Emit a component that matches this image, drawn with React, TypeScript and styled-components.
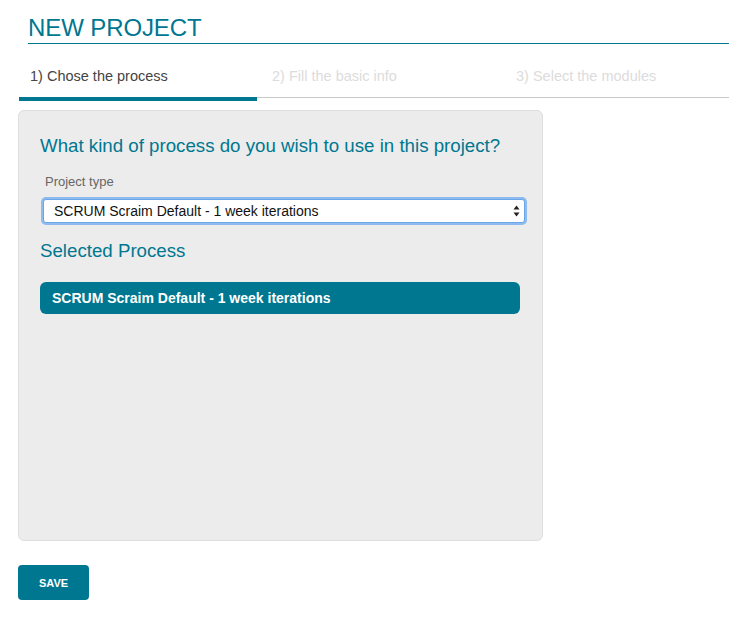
import React from "react";
import styled, { createGlobalStyle } from "styled-components";

const TEAL = "#007790";

const Global = createGlobalStyle`
  html, body { margin: 0; padding: 0; background: #fff; }
  body { font-family: "Liberation Sans", Arial, sans-serif; }
  * { box-sizing: border-box; }
`;

const Page = styled.div`
  display: flex;
  flex-direction: column;
  width: 729px;
`;

const Title = styled.h1`
  margin: 0 0 0 28px;
  padding-top: 13px;
  font-size: 24px;
  line-height: 30px;
  font-weight: 400;
  color: ${TEAL};
  border-bottom: 1px solid ${TEAL};
  letter-spacing: -0.1px;
`;

const TabBar = styled.div`
  display: grid;
  grid-template-columns: 238px 244px 1fr;
  margin-left: 19px;
`;

const Tab = styled.div<{ $active?: boolean }>`
  display: flex;
  flex-direction: column;
  padding-top: 23px;
  font-size: 14.5px;
  line-height: 18px;
  color: ${(p) => (p.$active ? "#444" : "#dcdcdc")};
`;

const TabLabel = styled.span<{ $inset: number }>`
  padding-left: ${(p) => p.$inset}px;
  padding-bottom: 12px;
`;

const TabLine = styled.div<{ $active?: boolean }>`
  height: 4px;
  background: ${(p) =>
    p.$active ? TEAL : "linear-gradient(#c8c8c8 0 1px, transparent 1px)"};
`;

const Panel = styled.section`
  margin: 9px 0 0 18px;
  width: 525px;
  height: 431px;
  background: #ececec;
  border: 1px solid #dedede;
  border-radius: 6px;
  padding: 24px 21px;
  display: flex;
  flex-direction: column;
`;

const Heading = styled.h2<{ $gap: number }>`
  margin: ${(p) => p.$gap}px 0 0 0;
  font-size: 18.7px;
  line-height: 22px;
  font-weight: 400;
  color: ${TEAL};
`;

const Label = styled.label`
  margin: 17px 0 0 5px;
  font-size: 13px;
  line-height: 16px;
  color: #666;
`;

const SelectWrap = styled.div`
  position: relative;
  margin: 9px 0 0 3px;
  width: 482px;
  height: 24px;
`;

const Select = styled.select`
  appearance: none;
  -webkit-appearance: none;
  width: 100%;
  height: 100%;
  margin: 0;
  padding: 0 24px 0 10px;
  font-family: "Liberation Sans", Arial, sans-serif;
  font-size: 14px;
  color: #111;
  background: #fff;
  border: 1px solid #6aa6e8;
  border-radius: 3px;
  box-shadow: 0 0 0 2px rgba(110, 170, 240, 0.75);
  outline: none;
`;

const Arrows = styled.svg`
  position: absolute;
  right: 5px;
  top: 6px;
  pointer-events: none;
`;

const SelectedBar = styled.div`
  margin-top: 20px;
  height: 32px;
  width: 480px;
  border-radius: 6px;
  background: ${TEAL};
  color: #fff;
  font-size: 14px;
  font-weight: 700;
  display: flex;
  align-items: center;
  padding-left: 12px;
`;

const SaveButton = styled.button`
  margin: 24px 0 0 18px;
  width: 71px;
  height: 35px;
  border: none;
  border-radius: 4px;
  background: ${TEAL};
  color: #fff;
  font-family: "Liberation Sans", Arial, sans-serif;
  font-size: 11px;
  font-weight: 700;
  align-self: flex-start;
`;

const tabs = [
  { label: "1) Chose the process", active: true, inset: 11 },
  { label: "2) Fill the basic info", active: false, inset: 15 },
  { label: "3) Select the modules", active: false, inset: 15 },
];

export default function App() {
  const option = "SCRUM Scraim Default - 1 week iterations";
  return (
    <Page>
      <Global />
      <Title>NEW PROJECT</Title>
      <TabBar>
        {tabs.map((t) => (
          <Tab key={t.label} $active={t.active}>
            <TabLabel $inset={t.inset}>{t.label}</TabLabel>
            <TabLine $active={t.active} />
          </Tab>
        ))}
      </TabBar>
      <Panel>
        <Heading $gap={0}>What kind of process do you wish to use in this project?</Heading>
        <Label htmlFor="ptype">Project type</Label>
        <SelectWrap>
          <Select id="ptype" defaultValue={option}>
            <option>{option}</option>
          </Select>
          <Arrows width="7" height="12" viewBox="0 0 7 12">
            <path d="M3.5 0.5 L6.5 4.5 L0.5 4.5 Z" fill="#222" />
            <path d="M3.5 11.5 L6.5 7.5 L0.5 7.5 Z" fill="#222" />
          </Arrows>
        </SelectWrap>
        <Heading $gap={17}>Selected Process</Heading>
        <SelectedBar>{option}</SelectedBar>
      </Panel>
      <SaveButton>SAVE</SaveButton>
    </Page>
  );
}
